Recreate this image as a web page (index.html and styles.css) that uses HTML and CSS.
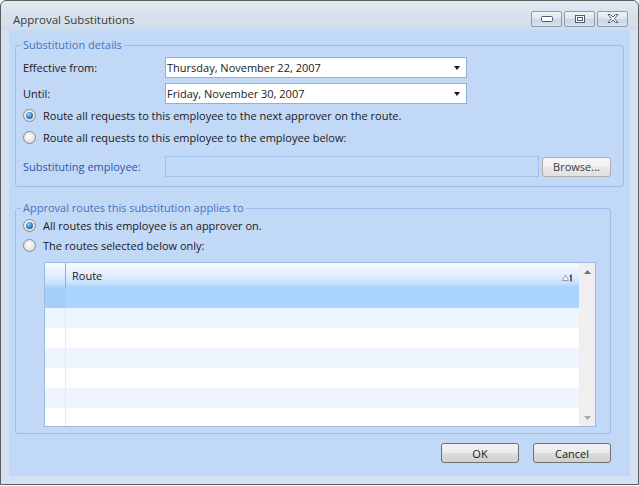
FILE: index.html
```html
<!DOCTYPE html>
<html lang="en">
<head>
    <meta charset="UTF-8">
    <title>Approval Substitutions</title>
    <link rel="stylesheet" href="styles.css">
</head>
<body>
    <div class="window">
        <div class="titlebar">
            <span class="title">Approval Substitutions</span>
            <div class="caption-buttons">
                <button class="cap-btn"><svg width="12" height="6" viewBox="0 0 12 6"><rect x="0.5" y="0.5" width="11" height="5" rx="1" fill="#fff" stroke="#4b5b70"/></svg></button>
                <button class="cap-btn"><svg width="10" height="8" viewBox="0 0 10 8"><rect x="0.5" y="0.5" width="9" height="7" fill="#fff" stroke="#4b5b70"/><rect x="2.5" y="2.5" width="5" height="3" fill="none" stroke="#4b5b70"/></svg></button>
                <button class="cap-btn"><svg width="12" height="9" viewBox="0 0 12 9"><path d="M1 0.5 L3.5 0.5 L6 3 L8.5 0.5 L11 0.5 L7.5 4.5 L11 8.5 L8.5 8.5 L6 6 L3.5 8.5 L1 8.5 L4.5 4.5 Z" fill="#fff" stroke="#4b5b70" stroke-linejoin="round"/></svg></button>
            </div>
        </div>

        <div class="client">
            <div class="group group-details">
                <span class="legend">Substitution details</span>

                <div class="row">
                    <label class="field-label">Effective from:</label>
                    <div class="combo">
                        <span>Thursday, November 22, 2007</span>
                        <span class="drop-arrow"></span>
                    </div>
                </div>
                <div class="row row-until">
                    <label class="field-label">Until:</label>
                    <div class="combo">
                        <span>Friday, November 30, 2007</span>
                        <span class="drop-arrow"></span>
                    </div>
                </div>

                <div class="radio-row radio-first">
                    <span class="radio checked"></span>
                    <span>Route all requests to this employee to the next approver on the route.</span>
                </div>
                <div class="radio-row">
                    <span class="radio"></span>
                    <span>Route all requests to this employee to the employee below:</span>
                </div>

                <div class="row row-employee">
                    <label class="field-label blue">Substituting employee:</label>
                    <div class="text-input disabled"></div>
                    <button class="btn btn-browse">Browse...</button>
                </div>
            </div>

            <div class="group group-routes">
                <span class="legend">Approval routes this substitution applies to</span>

                <div class="radio-row radio-routes">
                    <span class="radio checked"></span>
                    <span>All routes this employee is an approver on.</span>
                </div>
                <div class="radio-row">
                    <span class="radio"></span>
                    <span>The routes selected below only:</span>
                </div>

                <div class="grid">
                    <div class="grid-main">
                        <div class="grid-header">
                            <div class="sel-cell"></div>
                            <div class="head-cell">
                                <span>Route</span>
                                <svg class="sort-glyph" width="11" height="8" viewBox="0 0 11 8"><path d="M0.5 6.5 L3.5 1 L6.5 6.5 Z" fill="#fff" stroke="#9a9a9a"/><path d="M8 2.5 L9 1.5 L9 7.5" fill="none" stroke="#1c1c40" stroke-width="1.2"/></svg>
                            </div>
                        </div>
                        <div class="grid-row selected"><div class="sel-cell"></div><div class="cell"></div></div>
                        <div class="grid-row alt"><div class="sel-cell"></div><div class="cell"></div></div>
                        <div class="grid-row"><div class="sel-cell"></div><div class="cell"></div></div>
                        <div class="grid-row alt"><div class="sel-cell"></div><div class="cell"></div></div>
                        <div class="grid-row"><div class="sel-cell"></div><div class="cell"></div></div>
                        <div class="grid-row alt"><div class="sel-cell"></div><div class="cell"></div></div>
                        <div class="grid-row"><div class="sel-cell"></div><div class="cell"></div></div>
                    </div>
                    <div class="scrollbar">
                        <svg width="7" height="4" viewBox="0 0 7 4"><path d="M0 4 L3.5 0 L7 4 Z" fill="#6e6e6e"/></svg>
                        <svg width="7" height="4" viewBox="0 0 7 4"><path d="M0 0 L3.5 4 L7 0 Z" fill="#a8a8a8"/></svg>
                    </div>
                </div>
            </div>

            <div class="dialog-buttons">
                <button class="btn btn-dialog">OK</button>
                <button class="btn btn-dialog">Cancel</button>
            </div>
        </div>
    </div>
</body>
</html>
```

FILE: styles.css
```css
body {
    margin: 0;
    background-color: #ffffff;
    font-family: "Open Sans", "Noto Sans", sans-serif;
    font-size: 11px;
    color: #1a1a1a;
}

.window {
    width: 637px;
    height: 483px;
    border: 1px solid #5c5c5c;
    border-radius: 6px 6px 0 0;
    background-color: #d5e1f0;
    display: flex;
    flex-direction: column;
}

.titlebar {
    height: 29px;
    flex-shrink: 0;
    display: flex;
    align-items: center;
    justify-content: space-between;
    padding: 0 10px 0 12px;
    border-radius: 6px 6px 0 0;
    background: linear-gradient(#e0e8f2, #d0dcea);
}

.title {
    color: #3a3a3a;
    font-size: 11.5px;
    margin-top: 8px;
}

.caption-buttons {
    display: flex;
    gap: 2px;
    margin-top: 6px;
}

.cap-btn {
    width: 31px;
    height: 16px;
    padding: 0;
    border: 1px solid #8e9bab;
    border-radius: 2px;
    background: linear-gradient(#f1f4f8, #dce4ee 50%, #ccd7e4 51%, #d8e1ec);
    display: flex;
    align-items: center;
    justify-content: center;
}

.client {
    margin: 0 8px;
    height: 446px;
    background-color: #c2d8f7;
    padding: 15px 6px 0 6px;
    box-sizing: border-box;
}

.group {
    position: relative;
    box-sizing: border-box;
    border: 1px solid #9dbde9;
    border-radius: 3px;
    padding: 0 6px 0 7px;
}

.legend {
    position: absolute;
    top: -8px;
    left: 5px;
    padding: 0 2px;
    background-color: #c2d8f7;
    color: #4375be;
    line-height: 14px;
}

.group-details {
    height: 142px;
    padding-top: 11px;
}

.row {
    display: flex;
    align-items: center;
}

.field-label {
    width: 142px;
    flex-shrink: 0;
}

.field-label.blue {
    color: #2b5aa3;
}

.combo {
    width: 302px;
    height: 21px;
    box-sizing: border-box;
    border: 1px solid #8fb0de;
    background-color: #ffffff;
    display: flex;
    align-items: center;
    justify-content: space-between;
    padding: 0 6px 0 1px;
}

.drop-arrow {
    width: 0;
    height: 0;
    border-left: 3.5px solid transparent;
    border-right: 3.5px solid transparent;
    border-top: 4px solid #1a1a1a;
}

.row-until {
    margin-top: 5px;
}

.radio-row {
    display: flex;
    align-items: center;
    gap: 7px;
    height: 20px;
    margin-top: 2px;
}

.radio-first {
    margin-top: 1px;
}

.radio {
    width: 13px;
    height: 13px;
    box-sizing: border-box;
    border-radius: 50%;
    border: 1px solid #8c8c8c;
    background: radial-gradient(circle at 45% 40%, #ffffff, #e4e4e4 60%, #cacaca);
    display: flex;
    align-items: center;
    justify-content: center;
}

.radio.checked::after {
    content: "";
    width: 7px;
    height: 7px;
    border-radius: 50%;
    background: radial-gradient(circle at 40% 35%, #9fdcff, #2a7bbf 55%, #123f70);
}

.row-employee {
    margin-top: 9px;
}

.text-input {
    width: 374px;
    height: 21px;
    box-sizing: border-box;
    border: 1px solid #a3c0e8;
}

.btn {
    font-family: "Open Sans", "Noto Sans", sans-serif;
    font-size: 11px;
    color: #1a1a1a;
    border: 1px solid #707070;
    border-radius: 3px;
    background: linear-gradient(#f2f2f2, #ebebeb 50%, #dddddd 51%, #cfcfcf);
    padding: 0;
}

.btn-browse {
    width: 69px;
    height: 20px;
    margin-left: 3px;
    border-color: #acacac;
    background: linear-gradient(#f7f7f7, #f0f0f0 50%, #e8e8e8 51%, #e2e2e2);
    color: #3c3c3c;
}

.group-routes {
    width: 596px;
    height: 226px;
    margin-top: 21px;
    padding-top: 6px;
}

.radio-routes {
    margin-top: 0;
}

.radio-routes + .radio-row {
    margin-top: 0;
}

.grid {
    width: 552px;
    height: 165px;
    box-sizing: border-box;
    margin: 7px 0 0 21px;
    border: 1px solid #97bbe6;
    display: flex;
    background-color: #ffffff;
}

.grid-main {
    flex: 1;
    overflow: hidden;
}

.grid-header {
    height: 25px;
    display: flex;
    background: linear-gradient(#f7fbff, #e3effd 45%, #c8e1fd 80%, #a9d1fc);
}

.grid-header .sel-cell {
    border-right: 1px solid #a9a9a9;
}

.head-cell {
    flex: 1;
    display: flex;
    align-items: center;
    justify-content: space-between;
    padding: 0 6px 0 6px;
}

.sort-glyph {
    margin-top: 4px;
}

.sel-cell {
    width: 20px;
    flex-shrink: 0;
    border-right: 1px solid #e0ebf9;
}

.grid-row {
    height: 20px;
    display: flex;
}

.grid-row .cell {
    flex: 1;
}

.grid-row.alt {
    background-color: #eef5fe;
}

.grid-row.selected {
    background-color: #abd5ff;
}

.grid-row.selected .sel-cell {
    background-color: #a6cff8;
    border-right-color: #a6cff8;
}

.scrollbar {
    width: 16px;
    flex-shrink: 0;
    background-color: #efefef;
    display: flex;
    flex-direction: column;
    align-items: center;
    justify-content: space-between;
    padding: 7px 0 6px 0;
    box-sizing: border-box;
}

.dialog-buttons {
    display: flex;
    justify-content: flex-end;
    gap: 14px;
    margin-top: 9px;
    padding-right: 13px;
}

.btn-dialog {
    width: 78px;
    height: 20px;
}
```
